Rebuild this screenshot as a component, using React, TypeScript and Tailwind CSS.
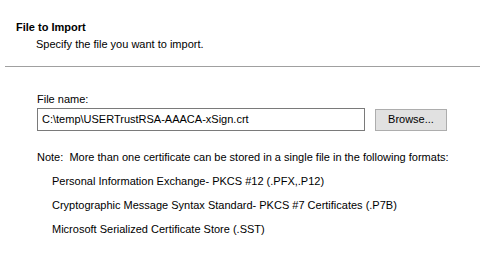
import React from "react";

export default function App() {
  return (
    <div className="w-[489px] h-[266px] bg-white text-black text-[11px] leading-[13px] overflow-hidden" style={{ fontFamily: '"Liberation Sans", Arial, sans-serif' }}>
      <div className="pl-[16px] pt-[21px]">
        <div className="font-bold">File to Import</div>
        <div className="pl-[20px] pt-[4px]">Specify the file you want to import.</div>
      </div>
      <div className="mt-[15px] ml-[5px] w-[475px] h-px bg-[#a0a0a0]" />
      <div className="pl-[37px] pt-[26px]">
        <div>File name:</div>
        <div className="flex items-center mt-[2px]">
          <div className="w-[328px] h-[23px] border border-[#7a7a7a] flex items-center pl-[4px]">C:\temp\USERTrustRSA-AAACA-xSign.crt</div>
          <div className="ml-[10px] w-[72px] h-[22px] border border-[#adadad] bg-[#e1e1e1] flex items-center justify-center">Browse...</div>
        </div>
        <div className="mt-[20px]">Note:&nbsp; More than one certificate can be stored in a single file in the following formats:</div>
        <div className="pl-[15px] flex flex-col gap-[11px] mt-[11px]">
          <div>Personal Information Exchange- PKCS #12 (.PFX,.P12)</div>
          <div>Cryptographic Message Syntax Standard- PKCS #7 Certificates (.P7B)</div>
          <div>Microsoft Serialized Certificate Store (.SST)</div>
        </div>
      </div>
    </div>
  );
}
